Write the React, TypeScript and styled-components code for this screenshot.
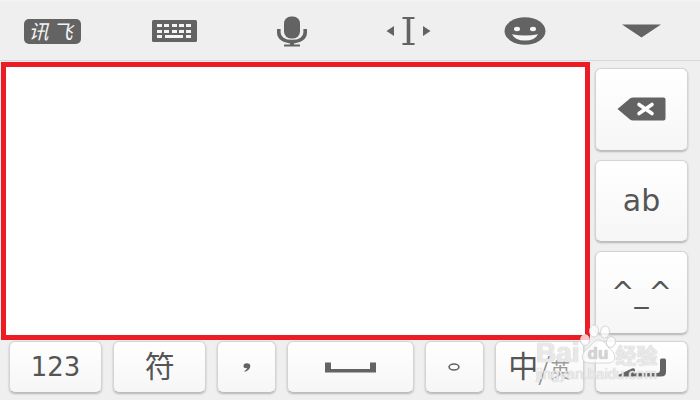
import React from "react";
import styled, { createGlobalStyle } from "styled-components";

const INK = "#636363";

const GlobalStyle = createGlobalStyle`
  *, *::before, *::after { box-sizing: border-box; }
  body {
    margin: 0;
    background: #efefef;
    color: #555;
    font-family: "DejaVu Sans", "Noto Sans CJK SC", sans-serif;
  }
  button { font: inherit; color: inherit; padding: 0; cursor: pointer; }
  svg { display: block; }
`;

const Keyboard = styled.main`
  position: relative;
  display: flex;
  flex-direction: column;
  overflow: hidden;
`;

const Toolbar = styled.header`
  display: grid;
  grid-template-columns: repeat(6, 1fr);
  height: 61px;
  border-top: 2px solid #f3f3f3;
  border-bottom: 1px solid #d8d8d8;
`;

const Tool = styled.button<{ $start?: boolean }>`
  display: flex;
  align-items: center;
  justify-content: ${(p) => (p.$start ? "flex-start" : "center")};
  padding-left: ${(p) => (p.$start ? "24px" : "0")};
  border: 0;
  background: none;
`;

const Brand = styled.span`
  display: flex;
  align-items: center;
  justify-content: center;
  gap: 4px;
  width: 57px;
  height: 25px;
  padding-right: 4px;
  border-radius: 5px;
  background: ${INK};
  color: #f4f4f4;
  font: italic 400 20px/24px "Noto Sans CJK SC", sans-serif;
`;

const Body = styled.div`
  display: flex;
  gap: 5px;
  padding: 1px 12px 0 1px;
`;

const Pad = styled.section`
  flex: 579;
  min-height: 278px;
  border: 5px solid #ed1c24;
  background: #fff;
`;

const SideKeys = styled.div`
  flex: 93;
  display: flex;
  flex-direction: column;
  gap: 9px;
  padding: 6px 0;
`;

const BottomKeys = styled.div`
  display: grid;
  grid-template-columns: 93fr 93fr 59fr 126fr 59fr 89fr 93fr;
  gap: 11px;
  padding: 1px 12px 8px 9px;
`;

const Key = styled.button<{ $size?: number }>`
  flex: 1;
  display: flex;
  align-items: center;
  justify-content: center;
  min-width: 0;
  min-height: 52px;
  border: 1px solid #d4d4d4;
  border-bottom-color: #bdbdbd;
  border-radius: 6px;
  background: linear-gradient(#fff, #f6f6f6);
  box-shadow: 0 1px 2px rgba(0, 0, 0, 0.25);
  font-size: ${(p) => p.$size ?? 26}px;
  line-height: 32px;
  white-space: nowrap;
`;

const Slash = styled.span`
  color: #888;
  font: 300 30px/32px "Noto Sans CJK SC", sans-serif;
`;

const Small = styled.span`
  padding-top: 8px;
  color: #999;
  font-size: 20px;
  line-height: 24px;
`;

const Watermark = styled.div`
  position: absolute;
  right: 38px;
  bottom: 17px;
  width: 126px;
  pointer-events: none;
  color: rgba(255, 255, 255, 0.65);
  text-shadow: 0 0 1px #c4c4c4, 0 0 1px #d0d0d0;
`;

const MarkRow = styled.div`
  display: flex;
  align-items: flex-end;
  height: 40px;
  font: bold 28px/22px "Liberation Sans", "Noto Sans CJK SC", sans-serif;
`;

const MarkCjk = styled.span`
  font: bold 21px/20px "Noto Sans CJK SC", sans-serif;
`;

const MarkUrl = styled.div`
  font: 15px/20px "Liberation Sans", sans-serif;
`;

const KeyboardIcon = () => (
  <svg width="45" height="22" viewBox="0 0 45 22">
    <rect width="45" height="22" rx="1.5" fill={INK} />
    <g fill="#f4f4f4">
      {[4, 10].map((y) =>
        [5, 12, 20, 27, 34].map((x) => <rect key={`${x}-${y}`} x={x} y={y} width="5" height="3" />)
      )}
      <rect x="5" y="15" width="5" height="3" />
      <rect x="13" y="15" width="18" height="3" />
      <rect x="34" y="15" width="5" height="3" />
    </g>
  </svg>
);

const MicIcon = () => (
  <svg width="30" height="31" viewBox="0 0 30 31">
    <rect x="7" y="0.5" width="16" height="22" rx="7" fill={INK} />
    <path d="M1.8 13v3.5C1.8 22 7 25.6 15 25.6S28.2 22 28.2 16.5V13" fill="none" stroke={INK} strokeWidth="3.6" />
    <path d="M13 25h4v3.5h6V30.5H7v-2h6z" fill={INK} />
  </svg>
);

const CursorIcon = () => (
  <svg width="45" height="28" viewBox="0 0 45 28">
    <path d="M0.5 14L8 9v10zM44.5 14L37 9v10z" fill={INK} />
    <path d="M16.5 0h12v2H24.300v24h4.200v2h-12v-2h4.200V2h-4.200z" fill={INK} />
  </svg>
);

const SmileIcon = () => (
  <svg width="42" height="28" viewBox="0 0 42 28">
    <ellipse cx="21" cy="14" rx="20.5" ry="13.7" fill={INK} />
    <ellipse cx="13" cy="12" rx="3" ry="2.2" fill="#f6f6f6" />
    <ellipse cx="29" cy="12" rx="3" ry="2.2" fill="#f6f6f6" />
    <path d="M8 17.2q13 2.8 26 0Q31 23.5 21 23.5T8 17.2z" fill="#f6f6f6" />
  </svg>
);

const CollapseIcon = () => (
  <svg width="39" height="14" viewBox="0 0 39 14">
    <path d="M0 0.5h39L19.5 13.5z" fill={INK} />
  </svg>
);

const DeleteIcon = () => (
  <svg width="49" height="24" viewBox="0 0 49 24">
    <path d="M0.5 12L13 1.5Q14.5 0.5 16 0.5H46.5Q48.5 0.5 48.5 2.5V21.5Q48.5 23.5 46.5 23.5H16Q14.5 23.5 13 22.5z" fill={INK} />
    <path d="M22 7.5L35 16.5M35 7.5L22 16.5" stroke="#fff" strokeWidth="3.6" strokeLinecap="round" />
  </svg>
);

const CommaIcon = () => (
  <svg width="8" height="9" viewBox="0 0 8 9">
    <path d="M0.5 3C0.5 1.2 1.8 0.3 3.8 0.3C6.2 0.3 7.5 1.5 7.3 3.5C7 6 4.8 8 1.8 8.7L1.3 7.9C3 7.2 4 6.3 4.2 5.1C2 5.6 0.5 4.7 0.5 3z" fill={INK} />
  </svg>
);

const SpaceIcon = () => (
  <svg width="51" height="11" viewBox="0 0 51 11">
    <path d="M0 0.5H6V7H45V0.5H51V10.5H0z" fill={INK} />
  </svg>
);

const StopIcon = () => (
  <svg width="12" height="8" viewBox="0 0 12 8">
    <ellipse cx="6" cy="4" rx="4.9" ry="3" fill="none" stroke={INK} strokeWidth="1.6" />
  </svg>
);

const EnterIcon = () => (
  <svg width="49" height="19" viewBox="0 0 49 19">
    <path d="M0 17.5L15 10.5Q18 9.5 18 12V15H40Q43 15 43 12V2Q43 0.5 44.5 0.5H47.5Q49 0.5 49 2V14Q49 18.5 44 18.5H2z" fill={INK} />
  </svg>
);

const Paw = () => (
  <svg width="36" height="40" viewBox="0 0 36 40">
    <g fill="#fff" fillOpacity="0.75" stroke="#d0d0d0" strokeOpacity="0.8">
      <ellipse cx="5" cy="16" rx="4.5" ry="5.5" />
      <ellipse cx="14" cy="7" rx="4.5" ry="6" />
      <ellipse cx="25" cy="8" rx="4.5" ry="6" transform="rotate(12 25 8)" />
      <ellipse cx="31" cy="18" rx="4.5" ry="5.5" transform="rotate(15 31 18)" />
      <path d="M19 16C13 16 12 22 7 25C0 30 1 39 9 39H28C36 39 37 31 31 26C26 22 25 16 19 16z" />
    </g>
    <text x="18" y="35" textAnchor="middle" fontFamily="Liberation Sans, sans-serif" fontSize="17" fontWeight="bold" fill="#d4d4d4">du</text>
  </svg>
);

export default function App() {
  return (
    <>
      <GlobalStyle />
      <Keyboard>
        <Toolbar>
          <Tool $start><Brand><span>讯</span><span>飞</span></Brand></Tool>
          <Tool aria-label="Keyboard layout"><KeyboardIcon /></Tool>
          <Tool aria-label="Voice input"><MicIcon /></Tool>
          <Tool aria-label="Move cursor"><CursorIcon /></Tool>
          <Tool aria-label="Emoji"><SmileIcon /></Tool>
          <Tool aria-label="Hide keyboard"><CollapseIcon /></Tool>
        </Toolbar>
        <Body>
          <Pad aria-label="Handwriting area" />
          <SideKeys>
            <Key aria-label="Delete"><DeleteIcon /></Key>
            <Key $size={30}>ab</Key>
            <Key $size={28}>^_^</Key>
          </SideKeys>
        </Body>
        <BottomKeys>
          <Key>123</Key>
          <Key $size={30}>符</Key>
          <Key aria-label="Comma"><CommaIcon /></Key>
          <Key aria-label="Space"><SpaceIcon /></Key>
          <Key aria-label="Full stop"><StopIcon /></Key>
          <Key $size={30}>中<Slash>/</Slash><Small>英</Small></Key>
          <Key aria-label="Enter"><EnterIcon /></Key>
        </BottomKeys>
        <Watermark>
          <MarkRow>Bai<Paw /><MarkCjk>经验</MarkCjk></MarkRow>
          <MarkUrl>jingyan.baidu.com</MarkUrl>
        </Watermark>
      </Keyboard>
    </>
  );
}
